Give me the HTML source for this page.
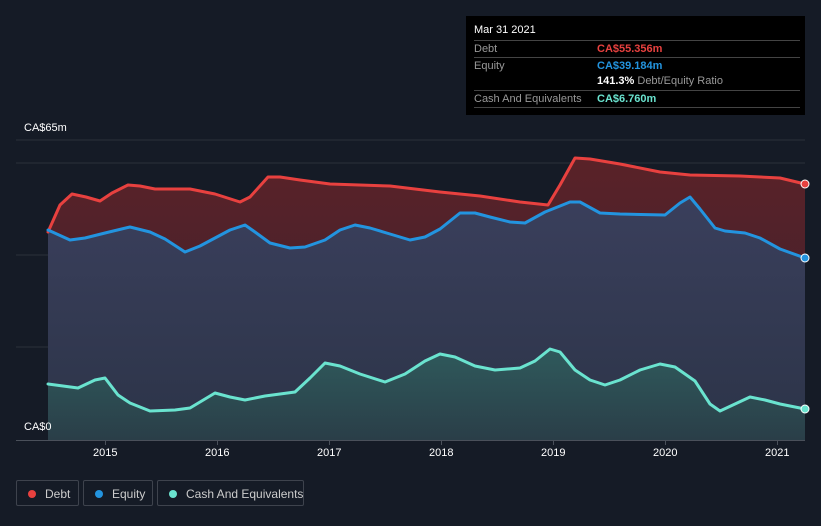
<!DOCTYPE html>
<html><head><style>
body{margin:0;width:821px;height:526px;background:#151b26;font-family:"Liberation Sans",sans-serif;overflow:hidden;position:relative}
.tt{position:absolute;left:466px;top:16px;width:339px;height:99px;background:#000;color:#fff;font-size:11px}
.tt .r{position:absolute;left:8px;width:326px;border-top:1px solid #444;height:16px;line-height:16px;color:#999;white-space:nowrap}
.tt .v{position:absolute;left:123px}
.leg{position:absolute;top:480px;height:26px;border:1px solid #3e434d;border-radius:2px;color:#ccc;font-size:12px;line-height:26px;box-sizing:border-box;white-space:nowrap}
.leg i{position:absolute;left:11px;top:9px;width:8px;height:8px;border-radius:50%}
.leg span{position:absolute;left:28px}
.ax{position:absolute;color:#fff;font-size:11px}
</style></head><body>
<svg width="821" height="526" style="position:absolute;left:0;top:0">
<defs>
<linearGradient id="gd" x1="0" y1="0" x2="0" y2="1"><stop offset="0" stop-color="#5a2228"/><stop offset="1" stop-color="#3a2030"/></linearGradient>
<linearGradient id="ge" x1="0" y1="0" x2="0" y2="1"><stop offset="0" stop-color="#3a3f5c"/><stop offset="1" stop-color="#2c3448"/></linearGradient>
<linearGradient id="gc" x1="0" y1="0" x2="0" y2="1"><stop offset="0" stop-color="#2f5a5c"/><stop offset="1" stop-color="#2a3e48"/></linearGradient>
</defs>
<g stroke="#2a303b" stroke-width="1"><line x1="16" y1="140" x2="805" y2="140"/><line x1="16" y1="163" x2="805" y2="163"/><line x1="16" y1="255" x2="805" y2="255"/><line x1="16" y1="347" x2="805" y2="347"/></g>
<polygon fill="url(#gd)" points="48,232 60,205 72,194 86,197 100,201 112,193 128,185 140,186 155,189 190,189 215,194 240,202 250,197 268,177 280,177 300,180 330,184 390,186 440,192 480,196 520,202 548,205 560,185 575,158 590,159 620,164 660,172 690,175 740,176 780,178 805,184 805,440 48,440"/>
<polygon fill="url(#ge)" points="48,230 70,240 85,238 105,233 130,227 150,232 165,239 185,252 200,246 215,238 230,230 245,225 255,232 270,243 290,248 305,247 325,240 340,230 355,225 370,228 390,234 410,240 425,237 440,229 460,213 475,213 490,217 510,222 525,223 545,212 570,202 580,202 600,213 620,214 665,215 680,203 690,197 700,209 715,228 725,231 745,233 760,238 780,249 805,258 805,440 48,440"/>
<polygon fill="url(#gc)" points="48,384 78,388 95,380 105,378 118,395 130,403 150,411 175,410 190,408 215,393 230,397 245,400 265,396 295,392 310,378 325,363 340,366 360,374 385,382 405,374 425,361 440,354 455,357 475,366 495,370 520,368 535,361 550,349 560,352 575,370 590,380 605,385 620,380 640,370 660,364 675,367 695,381 710,404 720,411 735,404 750,397 765,400 780,404 805,409 805,440 48,440"/>
<g fill="none" stroke-width="3" stroke-linejoin="round" stroke-linecap="round">
<polyline stroke="#e8413f" points="48,232 60,205 72,194 86,197 100,201 112,193 128,185 140,186 155,189 190,189 215,194 240,202 250,197 268,177 280,177 300,180 330,184 390,186 440,192 480,196 520,202 548,205 560,185 575,158 590,159 620,164 660,172 690,175 740,176 780,178 805,184"/>
<polyline stroke="#2394df" points="48,230 70,240 85,238 105,233 130,227 150,232 165,239 185,252 200,246 215,238 230,230 245,225 255,232 270,243 290,248 305,247 325,240 340,230 355,225 370,228 390,234 410,240 425,237 440,229 460,213 475,213 490,217 510,222 525,223 545,212 570,202 580,202 600,213 620,214 665,215 680,203 690,197 700,209 715,228 725,231 745,233 760,238 780,249 805,258"/>
<polyline stroke="#6ae3cf" points="48,384 78,388 95,380 105,378 118,395 130,403 150,411 175,410 190,408 215,393 230,397 245,400 265,396 295,392 310,378 325,363 340,366 360,374 385,382 405,374 425,361 440,354 455,357 475,366 495,370 520,368 535,361 550,349 560,352 575,370 590,380 605,385 620,380 640,370 660,364 675,367 695,381 710,404 720,411 735,404 750,397 765,400 780,404 805,409"/>
</g>
<circle cx="805" cy="184" r="4" fill="#e8413f" stroke="#fff" stroke-width="1"/>
<circle cx="805" cy="258" r="4" fill="#2394df" stroke="#fff" stroke-width="1"/>
<circle cx="805" cy="409" r="4" fill="#6ae3cf" stroke="#fff" stroke-width="1"/>
<rect x="16" y="420" width="32" height="20" fill="#151b26"/>
<line x1="16" y1="440.5" x2="805" y2="440.5" stroke="#4a505a"/>
<g stroke="#4a505a"><line x1="105.5" y1="440" x2="105.5" y2="445"/><line x1="217.5" y1="440" x2="217.5" y2="445"/><line x1="329.5" y1="440" x2="329.5" y2="445"/><line x1="441.5" y1="440" x2="441.5" y2="445"/><line x1="553.5" y1="440" x2="553.5" y2="445"/><line x1="665.5" y1="440" x2="665.5" y2="445"/><line x1="777.5" y1="440" x2="777.5" y2="445"/></g>
</svg>
<div class="ax" style="left:24px;top:122px">CA$65m</div>
<div class="ax" style="left:24px;top:421px">CA$0</div>
<div class="ax" style="left:93px;top:447px">2015</div>
<div class="ax" style="left:205px;top:447px">2016</div>
<div class="ax" style="left:317px;top:447px">2017</div>
<div class="ax" style="left:429px;top:447px">2018</div>
<div class="ax" style="left:541px;top:447px">2019</div>
<div class="ax" style="left:653px;top:447px">2020</div>
<div class="ax" style="left:765px;top:447px">2021</div>
<div class="tt">
<div style="position:absolute;left:8px;top:8px;color:#fff">Mar 31 2021</div>
<div class="r" style="top:24px">Debt<span class="v" style="color:#e8413f;font-weight:bold">CA$55.356m</span></div>
<div class="r" style="top:41px">Equity<span class="v" style="color:#2394df;font-weight:bold">CA$39.184m</span></div>
<div class="r" style="top:57px;border-top:none"><span class="v"><b style="color:#fff">141.3%</b> Debt/Equity Ratio</span></div>
<div class="r" style="top:74px">Cash And Equivalents<span class="v" style="color:#6ae3cf;font-weight:bold">CA$6.760m</span></div>
<div style="position:absolute;left:8px;top:91px;width:326px;border-top:1px solid #444"></div>
</div>
<div class="leg" style="left:16px;width:63px"><i style="background:#e8413f"></i><span>Debt</span></div>
<div class="leg" style="left:83px;width:70px"><i style="background:#2394df"></i><span>Equity</span></div>
<div class="leg" style="left:157px;width:147px"><i style="background:#6ae3cf"></i><span>Cash And Equivalents</span></div>
</body></html>
